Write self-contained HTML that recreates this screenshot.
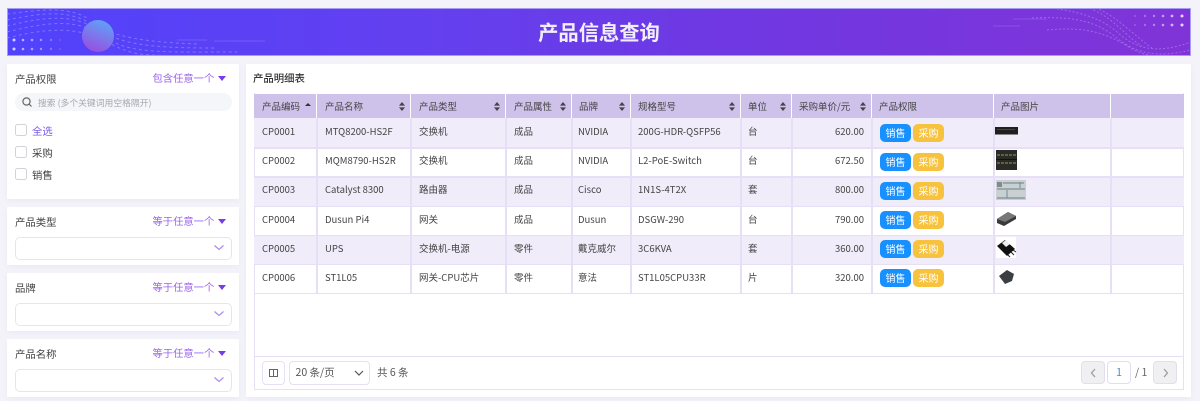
<!DOCTYPE html>
<html lang="zh">
<head>
<meta charset="utf-8">
<style>
html,body{margin:0;padding:0}
body{width:1200px;height:401px;overflow:hidden;position:relative;background:#f3f3f9;font-family:"Liberation Sans","Noto Sans CJK SC",sans-serif;color:#333;font-size:10px;filter:blur(.3px)}
div,span{position:absolute;box-sizing:border-box;white-space:nowrap}
.cjk{font-family:"Noto Sans CJK SC",sans-serif}
.card{background:#fff;box-shadow:0 2px 6px rgba(120,110,180,.06)}
.lbl{font:10.4px/14px "Noto Sans CJK SC",sans-serif;color:#444}
.op{font:10.3px/14px "Noto Sans CJK SC",sans-serif;color:#9a63ee}
.tri{width:0;height:0;border-left:4px solid transparent;border-right:4px solid transparent;border-top:5px solid #7c3aed}
.sel{left:15px;width:217px;height:23px;border:1px solid #e6e4ee;border-radius:5px;background:#fff}
.chev{position:absolute}
.cb{left:15px;width:12px;height:12px;border:1.3px solid #d2d2d8;border-radius:2.5px;background:#fff}
.hd{top:94px;height:24px;background:#cfc2ea;font:9.5px/24px "Noto Sans CJK SC",sans-serif;color:#444;padding-left:8px}
.s{position:absolute;right:5px;top:8px;width:6px;height:9px}
.row{left:254px;width:930px;height:29.2px}
.c{font:9.5px/14px "Noto Sans CJK SC",sans-serif;color:#444}
.vl{top:118px;width:1.5px;height:175.5px;background:#e6dff5}
.hl{left:254px;width:930px;height:1.5px;background:#e6dff5}
.b{width:31px;height:18px;border-radius:5px;color:#fff;font:10px/18px "Noto Sans CJK SC",sans-serif;text-align:center}
.b1{left:880px;background:#1890ff}
.b2{left:913px;background:#f7c23e}
.pg{width:24px;height:23px;border:1px solid #e1def0;border-radius:4px;background:#f0f0f2}
</style>
</head>
<body>
<!-- banner -->
<div style="left:7px;top:8px;width:1184px;height:48px;background:linear-gradient(90deg,#5142fc 0%,#6340ef 35%,#6f38e2 60%,#8034d8 100%);border:1px solid #a79cf5;overflow:hidden">
<svg width="1184" height="48" style="position:absolute;left:-1px;top:-1px" fill="none">
<g stroke="#a7b6ff" stroke-opacity=".45" stroke-width="1" stroke-dasharray="3 3">
<path d="M0 12C40 4 60 2 85 16S140 34 190 36"/>
<path d="M0 18C40 8 66 6 92 22S150 40 210 40"/>
<path d="M0 24C40 14 70 10 96 28S150 44 230 44"/>
<path d="M0 30C40 20 70 18 100 34S140 46 170 48"/>
<path d="M0 6C30 2 60 -2 80 10"/>
</g>
<g stroke="#c9b8ff" stroke-opacity=".22" stroke-width="1">
<path d="M207 33H258M170 32H200M986 18H1013M1006 11H1040"/>
</g>
<g stroke="#cdb2f5" stroke-opacity=".4" stroke-width="1" stroke-dasharray="2 2">
<path d="M1030 -2C1060 2 1090 6 1110 24S1150 46 1184 34"/>
<path d="M1025 10C1070 8 1090 14 1110 30S1150 50 1184 42"/>
<path d="M1040 22C1080 18 1100 26 1120 38S1150 48 1170 48"/>
<path d="M1075 -2C1105 6 1115 26 1135 38"/>
<path d="M1085 -2C1110 8 1125 26 1145 40"/>
</g>
<defs><linearGradient id="g" x1="0.7" y1="0" x2="0.3" y2="1"><stop offset="0" stop-color="#5ea3f8"/><stop offset="1" stop-color="#9a4de0"/></linearGradient></defs>
<circle cx="91" cy="28" r="16" fill="url(#g)"/>
<g fill="#cfd0ff">
<circle cx="7" cy="32" r="1.5"/><circle cx="16" cy="32" r="1.3" opacity=".8"/><circle cx="25" cy="32" r="1.3" opacity=".7"/><circle cx="34" cy="32" r="1.2" opacity=".6"/><circle cx="44" cy="32" r="1.2" opacity=".35"/><circle cx="53" cy="32" r="1" opacity=".2"/>
<circle cx="7" cy="41" r="1.5"/><circle cx="16" cy="41" r="1.3" opacity=".8"/><circle cx="25" cy="41" r="1.3" opacity=".7"/><circle cx="34" cy="41" r="1.2" opacity=".6"/><circle cx="44" cy="41" r="1.2" opacity=".35"/><circle cx="53" cy="41" r="1" opacity=".2"/>
</g>
<g fill="#e5d6fa">
<circle cx="1128" cy="8" r="1" opacity=".25"/><circle cx="1138" cy="8" r="1.2" opacity=".35"/><circle cx="1147" cy="8" r="1.2" opacity=".5"/><circle cx="1156" cy="8" r="1.3" opacity=".65"/><circle cx="1165" cy="8" r="1.4" opacity=".8"/><circle cx="1175" cy="8" r="1.5"/>
<circle cx="1128" cy="17" r="1" opacity=".25"/><circle cx="1138" cy="17" r="1.2" opacity=".35"/><circle cx="1147" cy="17" r="1.2" opacity=".5"/><circle cx="1156" cy="17" r="1.3" opacity=".65"/><circle cx="1165" cy="17" r="1.4" opacity=".8"/><circle cx="1175" cy="17" r="1.5"/>
</g>
</svg>
<div class="cjk" style="left:0;top:0;width:1182px;text-align:center;color:#f1eefc;font-weight:700;font-size:20.3px;line-height:45px">产品信息查询</div>
</div>

<!-- left cards -->
<div class="card" style="left:7px;top:64px;width:232px;height:135px"></div>
<div class="card" style="left:7px;top:207px;width:232px;height:58px"></div>
<div class="card" style="left:7px;top:273px;width:232px;height:58px"></div>
<div class="card" style="left:7px;top:339px;width:232px;height:58px"></div>

<div class="lbl" style="left:15px;top:72px">产品权限</div>
<div class="op" style="left:152.5px;top:71px">包含任意一个</div>
<div class="tri" style="left:218px;top:76px"></div>
<div style="left:15px;top:93px;width:217px;height:18px;border-radius:9px;background:#f5f6f9"></div>
<svg style="position:absolute;left:21px;top:96px" width="12" height="12" fill="none" stroke="#666" stroke-width="1.2"><circle cx="5.5" cy="5.5" r="3.6"/><path d="M8.2 8.2L10.5 10.5"/></svg>
<div class="cjk" style="left:38px;top:96px;font-size:8.8px;line-height:13px;color:#a6a6ae">搜索 (多个关键词用空格隔开)</div>
<div class="cb" style="top:124px"></div><div class="lbl" style="left:32px;top:124px;color:#7b5cf0">全选</div>
<div class="cb" style="top:146px"></div><div class="lbl" style="left:32px;top:146px">采购</div>
<div class="cb" style="top:168px"></div><div class="lbl" style="left:32px;top:168px">销售</div>

<div class="lbl" style="left:15px;top:215px">产品类型</div>
<div class="op" style="left:152.5px;top:214px">等于任意一个</div>
<div class="tri" style="left:218px;top:219px"></div>
<div class="sel" style="top:236.5px"></div>
<svg class="chev" style="left:213px;top:244px" width="12" height="8" fill="none" stroke="#a98bee" stroke-width="1.2"><path d="M1.5 1.5L6 5.5L10.5 1.5"/></svg>

<div class="lbl" style="left:15px;top:281px">品牌</div>
<div class="op" style="left:152.5px;top:280px">等于任意一个</div>
<div class="tri" style="left:218px;top:285px"></div>
<div class="sel" style="top:302.5px"></div>
<svg class="chev" style="left:213px;top:310px" width="12" height="8" fill="none" stroke="#a98bee" stroke-width="1.2"><path d="M1.5 1.5L6 5.5L10.5 1.5"/></svg>

<div class="lbl" style="left:15px;top:347px">产品名称</div>
<div class="op" style="left:152.5px;top:346px">等于任意一个</div>
<div class="tri" style="left:218px;top:351px"></div>
<div class="sel" style="top:368.5px"></div>
<svg class="chev" style="left:213px;top:376px" width="12" height="8" fill="none" stroke="#a98bee" stroke-width="1.2"><path d="M1.5 1.5L6 5.5L10.5 1.5"/></svg>

<!-- right panel -->
<div class="card" style="left:246px;top:64px;width:945px;height:333px"></div>
<div class="cjk" style="left:253px;top:71px;font-size:10.4px;line-height:14px;font-weight:500;color:#333">产品明细表</div>
<div style="left:254px;top:93px;width:930px;height:297px;border:1px solid #e6dff5;border-top:none"></div>

<!-- rows -->
<div class="row" style="top:118px;background:#f0ecf9"></div>
<div class="row" style="top:176.5px;background:#f0ecf9"></div>
<div class="row" style="top:235px;background:#f0ecf9"></div>
<div class="hl" style="top:147px"></div><div class="hl" style="top:176px"></div><div class="hl" style="top:205.5px"></div><div class="hl" style="top:234.5px"></div><div class="hl" style="top:263.5px"></div><div class="hl" style="top:292.5px"></div>
<div class="vl" style="left:316px"></div><div class="vl" style="left:410px"></div><div class="vl" style="left:505px"></div><div class="vl" style="left:571px"></div><div class="vl" style="left:630px"></div><div class="vl" style="left:740px"></div><div class="vl" style="left:791px"></div><div class="vl" style="left:871px"></div><div class="vl" style="left:993px"></div><div class="vl" style="left:1110px"></div>

<!-- header -->
<div class="hd" style="left:254px;width:62px">产品编码<svg class="s" viewBox="0 0 6 9"><path d="M3 1L6 4H0Z" fill="#333"/></svg></div>
<div class="hd" style="left:317px;width:93px">产品名称<svg class="s" viewBox="0 0 6 9"><path d="M3 0L6 3.6H0ZM3 9L0 5.4H6Z" fill="#444"/></svg></div>
<div class="hd" style="left:411px;width:94px">产品类型<svg class="s" viewBox="0 0 6 9"><path d="M3 0L6 3.6H0ZM3 9L0 5.4H6Z" fill="#444"/></svg></div>
<div class="hd" style="left:506px;width:65px">产品属性<svg class="s" viewBox="0 0 6 9"><path d="M3 0L6 3.6H0ZM3 9L0 5.4H6Z" fill="#444"/></svg></div>
<div class="hd" style="left:572px;width:58px;padding-left:7px">品牌<svg class="s" viewBox="0 0 6 9"><path d="M3 0L6 3.6H0ZM3 9L0 5.4H6Z" fill="#444"/></svg></div>
<div class="hd" style="left:631px;width:109px;padding-left:7px">规格型号<svg class="s" viewBox="0 0 6 9"><path d="M3 0L6 3.6H0ZM3 9L0 5.4H6Z" fill="#444"/></svg></div>
<div class="hd" style="left:741px;width:50px;padding-left:7px">单位<svg class="s" viewBox="0 0 6 9"><path d="M3 0L6 3.6H0ZM3 9L0 5.4H6Z" fill="#444"/></svg></div>
<div class="hd" style="left:792px;width:79px;padding-left:7px">采购单价/元<svg class="s" viewBox="0 0 6 9"><path d="M3 0L6 3.6H0ZM3 9L0 5.4H6Z" fill="#444"/></svg></div>
<div class="hd" style="left:872px;width:121px;padding-left:7px">产品权限</div>
<div class="hd" style="left:994px;width:116px;padding-left:7px">产品图片</div>
<div class="hd" style="left:1111px;width:73px"></div>

<!-- row text -->
<div class="c" style="left:262px;top:124px">CP0001</div><div class="c" style="left:325px;top:124px">MTQ8200-HS2F</div><div class="c" style="left:419px;top:124px">交换机</div><div class="c" style="left:514px;top:124px">成品</div><div class="c" style="left:578px;top:124px">NVIDIA</div><div class="c" style="left:638px;top:124px">200G-HDR-QSFP56</div><div class="c" style="left:748px;top:124px">台</div><div class="c" style="left:800px;top:124px;width:64px;text-align:right">620.00</div>
<div class="c" style="left:262px;top:153px">CP0002</div><div class="c" style="left:325px;top:153px">MQM8790-HS2R</div><div class="c" style="left:419px;top:153px">交换机</div><div class="c" style="left:514px;top:153px">成品</div><div class="c" style="left:578px;top:153px">NVIDIA</div><div class="c" style="left:638px;top:153px">L2-PoE-Switch</div><div class="c" style="left:748px;top:153px">台</div><div class="c" style="left:800px;top:153px;width:64px;text-align:right">672.50</div>
<div class="c" style="left:262px;top:182px">CP0003</div><div class="c" style="left:325px;top:182px">Catalyst 8300</div><div class="c" style="left:419px;top:182px">路由器</div><div class="c" style="left:514px;top:182px">成品</div><div class="c" style="left:578px;top:182px">Cisco</div><div class="c" style="left:638px;top:182px">1N1S-4T2X</div><div class="c" style="left:748px;top:182px">套</div><div class="c" style="left:800px;top:182px;width:64px;text-align:right">800.00</div>
<div class="c" style="left:262px;top:212px">CP0004</div><div class="c" style="left:325px;top:212px">Dusun Pi4</div><div class="c" style="left:419px;top:212px">网关</div><div class="c" style="left:514px;top:212px">成品</div><div class="c" style="left:578px;top:212px">Dusun</div><div class="c" style="left:638px;top:212px">DSGW-290</div><div class="c" style="left:748px;top:212px">台</div><div class="c" style="left:800px;top:212px;width:64px;text-align:right">790.00</div>
<div class="c" style="left:262px;top:241px">CP0005</div><div class="c" style="left:325px;top:241px">UPS</div><div class="c" style="left:419px;top:241px">交换机-电源</div><div class="c" style="left:514px;top:241px">零件</div><div class="c" style="left:578px;top:241px">戴克威尔</div><div class="c" style="left:638px;top:241px">3C6KVA</div><div class="c" style="left:748px;top:241px">套</div><div class="c" style="left:800px;top:241px;width:64px;text-align:right">360.00</div>
<div class="c" style="left:262px;top:270px">CP0006</div><div class="c" style="left:325px;top:270px">ST1L05</div><div class="c" style="left:419px;top:270px">网关-CPU芯片</div><div class="c" style="left:514px;top:270px">零件</div><div class="c" style="left:578px;top:270px">意法</div><div class="c" style="left:638px;top:270px">ST1L05CPU33R</div><div class="c" style="left:748px;top:270px">片</div><div class="c" style="left:800px;top:270px;width:64px;text-align:right">320.00</div>

<!-- badges -->
<div class="b b1" style="top:123.5px">销售</div><div class="b b2" style="top:123.5px">采购</div>
<div class="b b1" style="top:152.5px">销售</div><div class="b b2" style="top:152.5px">采购</div>
<div class="b b1" style="top:181.5px">销售</div><div class="b b2" style="top:181.5px">采购</div>
<div class="b b1" style="top:210.5px">销售</div><div class="b b2" style="top:210.5px">采购</div>
<div class="b b1" style="top:239.5px">销售</div><div class="b b2" style="top:239.5px">采购</div>
<div class="b b1" style="top:268.5px">销售</div><div class="b b2" style="top:268.5px">采购</div>

<!-- thumbnails -->
<svg style="position:absolute;left:995px;top:126px" width="24" height="10"><rect y="1" width="23" height="7.5" fill="#1f1f1f"/><path d="M2 3.5H20" stroke="#444" stroke-width="1"/></svg>
<svg style="position:absolute;left:995px;top:149px" width="23" height="23"><rect x="1" y="1" width="21" height="20" fill="#2b2b26"/><path d="M2 6H21M2 14H21" stroke="#5f5f4c" stroke-width="2" stroke-dasharray="3 1"/><path d="M1 10.5H22" stroke="#111"/></svg>
<svg style="position:absolute;left:995px;top:179px" width="32" height="22"><rect x="1" y="1" width="30" height="20" fill="#c9d0d2"/><rect x="2" y="3" width="5" height="5" fill="#7f8b90"/><path d="M8 4H29M2 10H30M2 19H30" stroke="#8b9aa0" stroke-width="1.4"/><path d="M25 3V9M12 11V19" stroke="#6f8a99"/></svg>
<svg style="position:absolute;left:996px;top:211px" width="22" height="16"><path d="M1 8L12 1L20 5V8L8 15L1 12Z" fill="#3a3a3a"/><path d="M1 8L12 1L20 5L9 11Z" fill="#777"/></svg>
<svg style="position:absolute;left:996px;top:237px" width="21" height="21"><rect width="20" height="21" fill="#fff"/><path d="M1 9L9 3L19 12L11 19Z" fill="#111"/><path d="M6 6L10 3L14 7L10 10Z" fill="#eee"/><path d="M12 18L14 20M15 15L18 18M17 13L20 15" stroke="#222"/></svg>
<svg style="position:absolute;left:998px;top:268px" width="18" height="18"><path d="M1 8L9 2L16 6L14 13L7 16Z" fill="#3b3f42"/></svg>

<!-- footer -->
<div class="hl" style="top:356px;height:1px"></div>
<div style="left:262px;top:361px;width:23px;height:24px;border:1px solid #e6dff5;border-radius:4px"></div>
<svg style="position:absolute;left:269px;top:368px" width="10" height="10" fill="none" stroke="#666"><rect x=".5" y="1.5" width="8" height="7"/><path d="M4.5 1.5V8.5"/></svg>
<div style="left:289px;top:361px;width:81px;height:24px;border:1px solid #e6dff5;border-radius:4px"></div>
<div class="cjk" style="left:295.5px;top:365px;font-size:10.5px;line-height:15px;color:#555">20 条/页</div>
<svg style="position:absolute;left:354px;top:370px" width="10" height="7" fill="none" stroke="#555" stroke-width="1.2"><path d="M1 1L5 5L9 1"/></svg>
<div class="cjk" style="left:377px;top:365px;font-size:10.5px;line-height:15px;color:#555">共 6 条</div>
<div class="pg" style="left:1081px;top:361px"></div>
<svg style="position:absolute;left:1090px;top:368px" width="7" height="10" fill="none" stroke="#999" stroke-width="1.2"><path d="M5 1L1.5 5L5 9"/></svg>
<div class="pg" style="left:1107px;top:361px;background:#fff"></div>
<div class="cjk" style="left:1107px;top:365px;width:24px;text-align:center;font-size:10.5px;line-height:15px;color:#4a87c9">1</div>
<div class="cjk" style="left:1135px;top:365px;font-size:10.5px;line-height:15px;color:#666">/ 1</div>
<div class="pg" style="left:1153px;top:361px"></div>
<svg style="position:absolute;left:1162px;top:368px" width="7" height="10" fill="none" stroke="#999" stroke-width="1.2"><path d="M2 1L5.5 5L2 9"/></svg>
</body>
</html>
